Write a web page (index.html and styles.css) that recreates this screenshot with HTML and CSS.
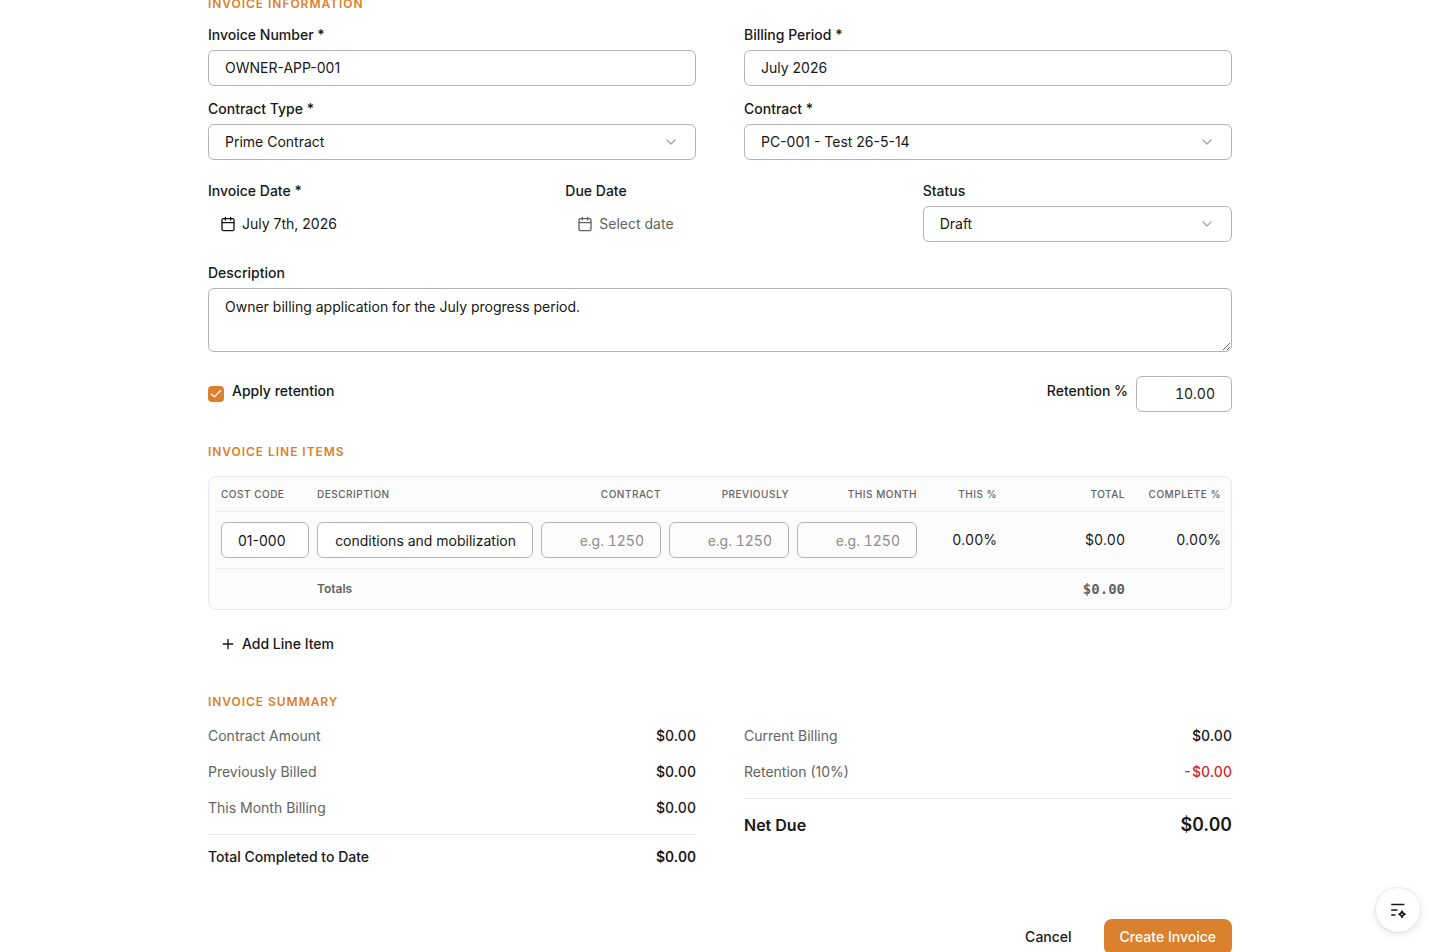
FILE: index.html
```
<!DOCTYPE html>
<html lang="en">
<head>
    <meta charset="UTF-8">
    <meta name="viewport" content="width=device-width, initial-scale=1.0">
    <title>Create Invoice</title>
    <link rel="stylesheet" href="styles.css">
</head>
<body>
<main class="page">
    <h2 class="section-title">Invoice Information</h2>
    <div class="grid two">
        <div class="field">
            <label class="label" for="number">Invoice Number *</label>
            <input class="input" id="number" type="text" value="OWNER-APP-001">
        </div>
        <div class="field">
            <label class="label" for="period">Billing Period *</label>
            <input class="input" id="period" type="text" value="July 2026">
        </div>
        <div class="field">
            <span class="label">Contract Type *</span>
            <button class="input select" type="button">Prime Contract
                <svg class="chevron" viewBox="0 0 24 24"><path d="m6 9 6 6 6-6"/></svg>
            </button>
        </div>
        <div class="field">
            <span class="label">Contract *</span>
            <button class="input select" type="button">PC-001 - Test 26-5-14
                <svg class="chevron" viewBox="0 0 24 24"><path d="m6 9 6 6 6-6"/></svg>
            </button>
        </div>
    </div>

    <div class="grid three">
        <div class="field">
            <span class="label">Invoice Date *</span>
            <button class="ghost date" type="button">
                <svg class="icon" viewBox="0 0 24 24"><path d="M8 2v4M16 2v4M3 10h18"/><rect x="3" y="4" width="18" height="18" rx="2"/></svg>
                July 7th, 2026
            </button>
        </div>
        <div class="field">
            <span class="label">Due Date</span>
            <button class="ghost date muted" type="button">
                <svg class="icon" viewBox="0 0 24 24"><path d="M8 2v4M16 2v4M3 10h18"/><rect x="3" y="4" width="18" height="18" rx="2"/></svg>
                Select date
            </button>
        </div>
        <div class="field">
            <span class="label">Status</span>
            <button class="input select" type="button">Draft
                <svg class="chevron" viewBox="0 0 24 24"><path d="m6 9 6 6 6-6"/></svg>
            </button>
        </div>
    </div>

    <div class="field description">
        <label class="label" for="description">Description</label>
        <textarea class="input textarea" id="description">Owner billing application for the July progress period.</textarea>
    </div>

    <div class="retention">
        <span class="checkbox">
            <svg viewBox="0 0 24 24"><path d="M20 6 9 17l-5-5"/></svg>
        </span>
        <span class="label">Apply retention</span>
        <label class="label push" for="retention">Retention %</label>
        <input class="input num rate" id="retention" type="text" value="10.00">
    </div>

    <h2 class="section-title">Invoice Line Items</h2>
    <div class="card">
        <div class="row head">
            <div>Cost Code</div>
            <div>Description</div>
            <div class="right">Contract</div>
            <div class="right">Previously</div>
            <div class="right">This Month</div>
            <div class="right">This %</div>
            <div class="right">Total</div>
            <div class="right">Complete %</div>
        </div>
        <div class="row item">
            <div><input class="input" type="text" value="01-000"></div>
            <div><input class="input right" type="text" value="conditions and mobilization"></div>
            <div><input class="input num clear" type="text" placeholder="e.g. 1250"></div>
            <div><input class="input num clear" type="text" placeholder="e.g. 1250"></div>
            <div><input class="input num clear" type="text" placeholder="e.g. 1250"></div>
            <div class="num">0.00%</div>
            <div class="num">$0.00</div>
            <div class="num">0.00%</div>
        </div>
        <div class="row totals">
            <div></div>
            <div>Totals</div>
            <div></div>
            <div></div>
            <div></div>
            <div></div>
            <div class="mono">$0.00</div>
            <div></div>
        </div>
    </div>
    <button class="ghost add" type="button">
        <svg class="icon" viewBox="0 0 24 24"><path d="M5 12h14M12 5v14"/></svg>
        Add Line Item
    </button>

    <h2 class="section-title">Invoice Summary</h2>
    <div class="summary">
        <div class="column">
            <div class="line"><span>Contract Amount</span><b>$0.00</b></div>
            <div class="line"><span>Previously Billed</span><b>$0.00</b></div>
            <div class="line"><span>This Month Billing</span><b>$0.00</b></div>
            <div class="line total"><span>Total Completed to Date</span><b>$0.00</b></div>
        </div>
        <div class="column">
            <div class="line"><span>Current Billing</span><b>$0.00</b></div>
            <div class="line"><span>Retention (10%)</span><b class="negative">-$0.00</b></div>
            <div class="line total net"><span>Net Due</span><b>$0.00</b></div>
        </div>
    </div>

    <div class="actions">
        <button class="button" type="button">Cancel</button>
        <button class="button primary" type="button">Create Invoice</button>
    </div>
</main>

<button class="fab" type="button" aria-label="Assistant">
    <svg viewBox="0 0 20 20">
        <path d="M3.2 4.6h13.200M3.2 10h6.200M3.2 15h4.200"/>
        <path class="spark" d="M14 11.200Q14.600 13.600 17 14.200Q14.600 14.800 14 17.200Q13.400 14.800 11 14.200Q13.400 13.600 14 11.200Z"/>
    </svg>
</button>
</body>
</html>
```
FILE: styles.css
```
* {
    box-sizing: border-box;
}

body {
    margin: 0;
    height: 100vh;
    overflow: hidden;
    background-color: #fff;
    color: #171717;
    font-family: Inter, sans-serif;
    font-size: 14px;
    line-height: 20px;
}

button,
input,
textarea {
    font: inherit;
    color: inherit;
    letter-spacing: inherit;
}

svg {
    fill: none;
    stroke: currentColor;
    stroke-width: 2;
    stroke-linecap: round;
    stroke-linejoin: round;
    flex-shrink: 0;
}

.page {
    width: 1024px;
    margin: -4px auto 0;
}

.section-title {
    margin: 0 0 16px;
    font-size: 12px;
    line-height: 16px;
    font-weight: 600;
    letter-spacing: 0.96px;
    text-transform: uppercase;
    color: #db802c;
}

.grid {
    display: grid;
    gap: 16px 48px;
    margin-bottom: 24px;
}

.two {
    grid-template-columns: repeat(2, 1fr);
}

.three {
    grid-template-columns: repeat(3, 1fr);
}

.field {
    display: flex;
    flex-direction: column;
    gap: 8px;
    min-width: 0;
}

.label {
    line-height: 14px;
    font-weight: 500;
}

.input {
    display: block;
    width: 100%;
    height: 36px;
    padding: 0 16px 1px;
    border: 1px solid #b3b3b3;
    border-radius: 6px;
    background-color: #fff;
    outline: none;
}

.input::placeholder {
    color: #8c8c8c;
}

.select {
    display: flex;
    align-items: center;
    justify-content: space-between;
    padding-bottom: 0;
    text-align: left;
}

.chevron {
    width: 16px;
    height: 16px;
    color: #a8a8a8;
}

.icon {
    width: 16px;
    height: 16px;
}

.ghost {
    display: flex;
    align-items: center;
    gap: 6px;
    height: 36px;
    padding: 0 12px;
    border: none;
    background: none;
}

.muted {
    color: #636363;
}

.textarea {
    height: 64px;
    padding: 8px 16px;
    resize: vertical;
}

.retention {
    display: flex;
    align-items: center;
    gap: 8px;
    margin: 24px 0 32px;
}

.retention .label {
    margin-bottom: 6px;
}

.push {
    margin-left: auto;
}

.rate {
    width: 96px;
}

.checkbox {
    display: flex;
    align-items: center;
    justify-content: center;
    width: 16px;
    height: 16px;
    border-radius: 4px;
    background-color: #db802c;
    color: #fff;
}

.checkbox svg {
    width: 14px;
    height: 14px;
}

.right {
    text-align: right;
}

.num {
    text-align: right;
    font-variant-numeric: tabular-nums;
}

.card {
    padding: 0 8px;
    border: 1px solid #e8e8e8;
    border-radius: 8px;
    background-color: #fcfcfc;
}

.row {
    display: grid;
    grid-template-columns: 96px 224px 128px 128px 128px 80px 128px 94px;
    align-items: center;
    border-bottom: 1px solid #ebebeb;
}

.row > div {
    padding: 0 4px;
}

.row > div:last-child {
    padding-right: 2px;
}

.head {
    height: 35px;
    font-size: 10px;
    font-weight: 500;
    letter-spacing: 0.5px;
    text-transform: uppercase;
    color: #636363;
}

.item {
    height: 57px;
}

.item .input {
    padding-top: 1px;
    padding-bottom: 0;
}

.clear {
    background: none;
}

.totals {
    height: 40px;
    border-bottom: none;
    font-size: 12px;
    font-weight: 600;
    color: #636363;
}

.mono {
    text-align: right;
    font-family: "DejaVu Sans Mono", monospace;
    font-size: 14px;
    font-weight: 700;
}

.add {
    margin: 16px 0 32px;
    font-weight: 500;
}

.summary {
    display: grid;
    grid-template-columns: 1fr 1fr;
    gap: 48px;
}

.column {
    display: flex;
    flex-direction: column;
    gap: 16px;
}

.line {
    display: flex;
    justify-content: space-between;
    color: #636363;
}

.line b {
    color: #171717;
    font-weight: 500;
    font-variant-numeric: tabular-nums;
}

.line .negative {
    color: #cf2a2a;
}

.total {
    padding-top: 12px;
    border-top: 1px solid #e8e8e8;
    color: #171717;
    font-weight: 500;
}

.total b {
    font-weight: 600;
}

.net {
    font-size: 16px;
    line-height: 28px;
    font-weight: 600;
}

.net b {
    font-size: 18px;
    font-weight: 600;
}

.actions {
    display: flex;
    justify-content: flex-end;
    gap: 16px;
    margin-top: 52px;
}

.button {
    height: 36px;
    padding: 0 16px;
    border: none;
    border-radius: 8px;
    background: none;
    font-weight: 500;
}

.primary {
    background-color: #db802c;
    color: #fff;
}

.fab {
    position: fixed;
    right: 20px;
    bottom: 20px;
    display: flex;
    align-items: center;
    justify-content: center;
    width: 44px;
    height: 44px;
    padding: 0;
    border: none;
    border-radius: 50%;
    background-color: #fff;
    box-shadow: 0 0 0 1px rgba(0, 0, 0, 0.05), 0 2px 8px rgba(0, 0, 0, 0.12);
}

.fab svg {
    width: 20px;
    height: 20px;
    stroke-width: 1.5;
    stroke-linecap: butt;
}

.fab .spark {
    stroke-width: 1.7;
}
```
